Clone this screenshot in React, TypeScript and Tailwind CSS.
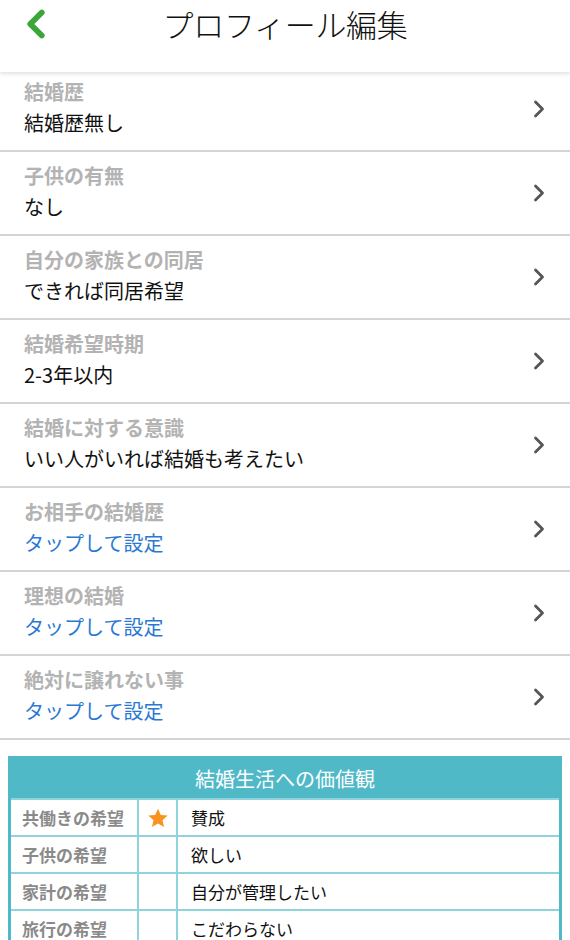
import { ChevronLeft, ChevronRight } from 'lucide-react';

type ProfileRow = {
  label: string;
  value: string | null;
};

const rows: ProfileRow[] = [
  { label: '結婚歴', value: '結婚歴無し' },
  { label: '子供の有無', value: 'なし' },
  { label: '自分の家族との同居', value: 'できれば同居希望' },
  { label: '結婚希望時期', value: '2-3年以内' },
  { label: '結婚に対する意識', value: 'いい人がいれば結婚も考えたい' },
  { label: 'お相手の結婚歴', value: null },
  { label: '理想の結婚', value: null },
  { label: '絶対に譲れない事', value: null },
];

const values = [
  { label: '共働きの希望', starred: true, value: '賛成' },
  { label: '子供の希望', starred: false, value: '欲しい' },
  { label: '家計の希望', starred: false, value: '自分が管理したい' },
  { label: '旅行の希望', starred: false, value: 'こだわらない' },
];

const font = { fontFamily: '"Noto Sans CJK JP", "Noto Sans", sans-serif' };

export default function App() {
  return (
    <div className="w-[570px] min-h-[940px] bg-white overflow-hidden" style={font}>
      <header className="relative z-10 h-[72px] bg-white flex items-start justify-center shadow-[0_2px_4px_rgba(0,0,0,0.12)]">
        <button type="button" className="absolute left-[13px] top-[1px] text-[#3aa63a]">
          <ChevronLeft size={46} strokeWidth={3} />
        </button>
        <h1 className="mt-[3px] text-[31px] leading-[42px] font-light text-[#111] tracking-[-0.3px]">プロフィール編集</h1>
      </header>

      <div className="-mt-[4px]">
        {rows.map((row) => (
          <div key={row.label} className="h-[84px] flex items-center justify-between pl-[24px] pr-[17px] border-b-2 border-[#d4d4d4]">
            <div className="flex flex-col pb-[3px]">
              <span className="text-[20px] leading-[30px] font-bold text-[#b3b3b3]">{row.label}</span>
              <span className={`text-[20px] leading-[31px] ${row.value ? 'text-[#111]' : 'text-[#2b78d4]'}`}>
                {row.value ?? 'タップして設定'}
              </span>
            </div>
            <ChevronRight size={28} strokeWidth={2.4} className="text-[#555]" />
          </div>
        ))}
      </div>

      <div className="mt-[16px] mx-[8px] border-[3px] border-[#4fb9c8] border-b-0">
        <div className="h-[39px] bg-[#4fb9c8] flex items-center justify-center text-white text-[20px]">結婚生活への価値観</div>
        {values.map((v) => (
          <div key={v.label} className="grid grid-cols-[128px_39px_1fr] h-[37px] border-t-2 border-[#8fd3dc] first:border-t-0">
            <div className="flex items-center pl-[11px] text-[17px] font-bold text-[#8a8a8a] border-r-2 border-[#8fd3dc]">{v.label}</div>
            <div className="flex items-center justify-center border-r-2 border-[#8fd3dc]">
              {v.starred && (
                <svg width="22" height="22" viewBox="0 0 24 24">
                  <path d="M12 1.8l3.1 6.9 7.4.7-5.6 5 1.7 7.4L12 17.9l-6.6 3.9 1.7-7.4-5.6-5 7.4-.7z" fill="#f7931e" />
                </svg>
              )}
            </div>
            <div className="flex items-center pl-[13px] text-[17px] text-[#111]">{v.value}</div>
          </div>
        ))}
      </div>
    </div>
  );
}
